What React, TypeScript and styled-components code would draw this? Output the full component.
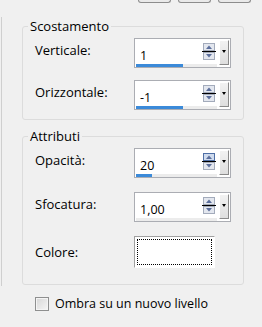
import styled, { createGlobalStyle } from "styled-components";

const GlobalStyle = createGlobalStyle`
  html, body {
    margin: 0;
    background: #f0f0f0;
  }
  body {
    font-family: "Open Sans", "Liberation Sans", sans-serif;
    font-size: 12.5px;
    color: #000;
  }
`;

type SpinField = {
  label: string;
  value: string;
  fill: number;
  active?: boolean;
};

const offsetFields: SpinField[] = [
  { label: "Verticale:", value: "1", fill: 47 },
  { label: "Orizzontale:", value: "-1", fill: 47 },
];

const attrFields: SpinField[] = [
  { label: "Opacità:", value: "20", fill: 16, active: true },
  { label: "Sfocatura:", value: "1,00", fill: 0 },
];

const SpinArrows = ({ active }: { active?: boolean }) => {
  const edge = active ? "#4f6fa6" : "#a3abbb";
  const face = active ? "#cfdbee" : "#e3e7ef";
  return (
    <svg width="14" height="18" viewBox="0 0 14 18">
      <rect x="1.5" y="0.5" width="11" height="7" fill={face} stroke={edge} />
      <polygon points="4,6 10,6 7,2.5" fill="#5b6e9c" />
      <line x1="0" y1="8.5" x2="14" y2="8.5" stroke="#000" />
      <rect x="1.5" y="9.5" width="11" height="7" fill="#e3e7ef" stroke="#a3abbb" />
      <polygon points="4,11 10,11 7,14.5" fill="#5b6e9c" />
    </svg>
  );
};

const Spinner = ({ field }: { field: SpinField }) => (
  <Row>
    <Label>{field.label}</Label>
    <SpinBox>
      <SpinMain>
        <SpinTop>
          <Value>{field.value}</Value>
          <ArrowSlot>
            <SpinArrows active={field.active} />
          </ArrowSlot>
        </SpinTop>
        <Track>
          <Bar style={{ width: field.fill }} />
        </Track>
      </SpinMain>
      <DropButton />
    </SpinBox>
  </Row>
);

const App = () => {
  return (
    <Page>
      <GlobalStyle />
      <TopBar>
        <TabStub />
        <TabStub />
        <TabStub />
      </TopBar>
      <Panel>
        <Group>
          <Legend>Scostamento</Legend>
          <Rows>
            {offsetFields.map((f) => (
              <Spinner key={f.label} field={f} />
            ))}
          </Rows>
        </Group>
        <Group $second>
          <Legend>Attributi</Legend>
          <Rows $loose>
            {attrFields.map((f) => (
              <Spinner key={f.label} field={f} />
            ))}
            <Row>
              <Label $colour>Colore:</Label>
              <Swatch />
            </Row>
          </Rows>
        </Group>
      </Panel>
      <CheckRow>
        <CheckBox />
        <span>Ombra su un nuovo livello</span>
      </CheckRow>
    </Page>
  );
};

const Page = styled.div`
  width: 262px;
  height: 327px;
  overflow: hidden;
`;

const TopBar = styled.div`
  display: flex;
  justify-content: flex-end;
  gap: 7px;
  padding-right: 11px;
  height: 3px;
`;

const TabStub = styled.div`
  width: 33px;
  height: 3px;
  box-sizing: border-box;
  border: 1px solid #8c8c8c;
  border-top: none;
  border-radius: 0 0 3px 3px;
  background: #e9e9e9;
`;

const Panel = styled.div`
  margin: 14px 0 0 1px;
  padding: 1px 0 1px 20px;
  border-left: 1px solid #cfcfcf;
`;

const Group = styled.fieldset<{ $second?: boolean }>`
  margin: ${(p) => (p.$second ? "8px" : "0")} 0 0 0;
  padding: 4px 0 ${(p) => (p.$second ? "16px" : "9px")} 12px;
  width: 222px;
  box-sizing: border-box;
  border: 1px solid #dcdcdc;
  border-radius: 3px;
  min-width: 0;
`;

const Legend = styled.legend`
  margin-left: -7px;
  padding: 0 2px;
  font-size: 13px;
  line-height: 16px;
`;

const Rows = styled.div<{ $loose?: boolean }>`
  display: flex;
  flex-direction: column;
  gap: ${(p) => (p.$loose ? "14px" : "12px")};
`;

const Row = styled.div`
  display: flex;
  align-items: flex-start;
`;

const Label = styled.div<{ $colour?: boolean }>`
  width: 99px;
  font-size: 13px;
  line-height: 16px;
  padding-top: ${(p) => (p.$colour ? "8px" : "4px")};
`;

const SpinBox = styled.div`
  display: flex;
  width: 97px;
  height: 30px;
  box-sizing: border-box;
  border: 1px solid #abadb3;
  background: #fff;
`;

const SpinMain = styled.div`
  flex: 1;
  display: flex;
  flex-direction: column;
  padding: 0 1px 1px 1px;
`;

const SpinTop = styled.div`
  flex: 1;
  display: flex;
  align-items: flex-start;
`;

const Value = styled.div`
  flex: 1;
  padding: 9px 0 0 4px;
  line-height: 16px;
`;

const ArrowSlot = styled.div`
  padding-top: 4px;
  margin-right: 1px;
  line-height: 0;
`;

const Track = styled.div`
  height: 3px;
  background: #ececec;
`;

const Bar = styled.div`
  height: 3px;
  background: #3b8ad9;
`;

const DropButton = styled.div`
  position: relative;
  width: 10px;
  height: 25px;
  margin: 1px 1px 0 1px;
  box-sizing: border-box;
  border: 1px solid;
  border-color: #fff #8a8a8a #8a8a8a #fff;
  background: linear-gradient(#f2f2f2, #dedede);
  &::after {
    content: "";
    position: absolute;
    left: 2px;
    top: 9px;
    border-left: 2.5px solid transparent;
    border-right: 2.5px solid transparent;
    border-top: 3px solid #000;
  }
`;

const Swatch = styled.div`
  width: 81px;
  height: 32px;
  box-sizing: border-box;
  border: 1px solid;
  border-color: #a0a0a0 #fff #fff #a0a0a0;
  background: #fff;
  outline: 1px dotted #000;
  outline-offset: -4px;
`;

const CheckRow = styled.div`
  display: flex;
  align-items: center;
  gap: 6px;
  margin: 10px 0 0 35px;
  line-height: 16px;
`;

const CheckBox = styled.div`
  width: 14px;
  height: 14px;
  box-sizing: border-box;
  border: 1px solid #8e8f8f;
  background: linear-gradient(135deg, #d6d6d6, #f6f6f6);
  box-shadow: inset 0 0 0 1px #f4f4f4;
`;

export default App;
